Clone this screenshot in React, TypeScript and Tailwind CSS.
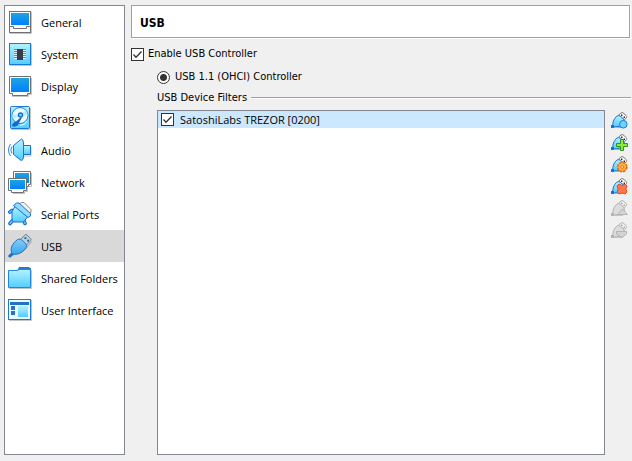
import React, { useState } from 'react';

interface IconProps {
  className?: string;
}

const Gradients: React.FC = () => (
  <svg className="absolute w-0 h-0" aria-hidden="true">
    <defs>
      <linearGradient id="screen" x1="0" y1="0" x2="0" y2="1">
        <stop offset="0" stopColor="#1fa3e0" />
        <stop offset="1" stopColor="#0080ff" />
      </linearGradient>
      <linearGradient id="cyan" x1="0" y1="0" x2="0" y2="1">
        <stop offset="0" stopColor="#b4f2ff" />
        <stop offset="1" stopColor="#52cdff" />
      </linearGradient>
      <linearGradient id="plug" x1="0" y1="0" x2="0" y2="1">
        <stop offset="0" stopColor="#86ccf2" />
        <stop offset="1" stopColor="#36a8f2" />
      </linearGradient>
    </defs>
  </svg>
);

const GeneralIcon: React.FC = () => (
  <>
    <path d="M2 23.5H23.5V2" fill="none" stroke="#c4c4c4" />
    <rect x="1.5" y="1.5" width="21" height="21" fill="#fff" stroke="#707070" />
    <rect x="3" y="3" width="18" height="12" fill="url(#screen)" />
    <path d="M1.5 16.5H5.5V18.5H18.5V16.5H22.5" fill="none" stroke="#707070" />
  </>
);

const SystemIcon: React.FC = () => (
  <>
    <path d="M2 23.5H23.5V2" fill="none" stroke="#c4c4c4" />
    <rect x="1.5" y="1.5" width="21" height="21" fill="url(#cyan)" stroke="#1a78d6" />
    <path d="M6 7.5H18M6 9.5H18M6 11.5H18M6 13.5H18M6 15.5H18" stroke="#3d95d8" />
    <path d="M6 8.5H18M6 10.5H18M6 12.5H18M6 14.5H18M6 16.5H18" stroke="#d8f6ff" />
    <rect x="9" y="7" width="6" height="11" fill="#363c48" />
  </>
);

const DisplayIcon: React.FC = () => (
  <>
    <path d="M4 22.5H20.5V20.5H23.5V4" fill="none" stroke="#c4c4c4" />
    <path d="M1.5 2.5H22.5V19.5H19.5V21.5H4.5V19.5H1.5Z" fill="#fff" stroke="#707070" />
    <rect x="3" y="4" width="18" height="14" fill="url(#screen)" />
  </>
);

const StorageIcon: React.FC = () => (
  <>
    <path d="M3 23.5H22.5V2" fill="none" stroke="#c4c4c4" />
    <rect x="2.5" y="0.5" width="19" height="22" rx="1" fill="url(#cyan)" stroke="#1a78d6" />
    <circle cx="12" cy="9.5" r="8" fill="#e8faff" stroke="#2583d4" />
    <path d="M12 9.5L17.5 4A8 8 0 0 1 19.5 9.5ZM12 9.5L5 13A8 8 0 0 1 4.5 8Z" fill="#b9ecfc" />
    <circle cx="12.5" cy="9" r="2" fill="#7fd8ff" stroke="#1a6fc4" strokeWidth="1.4" />
    <path d="M14 11.5L9.5 19.5Q7 21.5 4 20Q4 17 8 15.5L12.5 11.5Z" fill="#1769c9" />
    <path d="M12 19.5Q17 19 19 15" fill="none" stroke="#f0fcff" />
  </>
);

const AudioIcon: React.FC = () => (
  <>
    <path d="M13 23L8 18.5M16 18H23V9" fill="none" stroke="#b8c4cc" />
    <path d="M13.5 1L5.5 7.5V16.5L13.5 22.5Q15 22.5 15.5 19V5Q15 1 13.5 1Z" fill="url(#cyan)" stroke="#1f72c8" />
    <path d="M15.5 7.5H22.5V16.5H15.5Z" fill="url(#cyan)" stroke="#1f72c8" />
    <path d="M4 8.5Q1.5 12 4 15.5M2.5 6Q-1.5 12 2.5 18" fill="none" stroke="#3185d0" />
  </>
);

const NetworkIcon: React.FC = () => (
  <>
    <path d="M5 23.5H16.5V21.5H19.5V16.5H23.5V3" fill="none" stroke="#c0c0c0" />
    <path d="M5.5 1.5H22.5V14.5H20.5V16.5H8.5V14.5H5.5Z" fill="#fff" stroke="#707070" />
    <rect x="7" y="3" width="14" height="10" fill="url(#screen)" />
    <path d="M0.5 8.5H18.5V20.5H15.5V22.5H3.5V20.5H0.5Z" fill="#fff" stroke="#707070" />
    <rect x="2" y="10" width="15" height="9" fill="url(#screen)" />
  </>
);

const SerialIcon: React.FC = () => (
  <>
    <path d="M11 2L13.5 0.5H16L23 7.5V10.5L20.5 12.5Z" fill="#f4f4f4" stroke="#858585" />
    <path d="M4.5 18.5L2 21.5M16 19L17 21.5M1.8 10.2L4 8.5" stroke="#1c6fca" strokeWidth="3.6" strokeLinecap="round" />
    <path d="M4.5 18.5L2 21.5M16 19L17 21.5M1.8 10.2L4 8.5" stroke="#71caff" strokeWidth="1.4" strokeLinecap="round" />
    <path d="M7 4.5L4 9.5V18.5L6 20H15.5L19.5 15L9.5 4.5Z" fill="url(#cyan)" stroke="#1c6fca" />
    <path d="M5.5 3.5L8.5 1H11L22.5 11.5V14L20 15.5Z" fill="#8fdcff" stroke="#1c6fca" />
  </>
);

const UsbPlugIcon: React.FC = () => (
  <>
    <path d="M2 23.5L6 20.5Q14 20 18.5 14L23.5 7.5" fill="none" stroke="#9da5ab" />
    <path d="M12 6L17 0.8Q18 0 19 1L22.8 4.8Q23.5 5.7 22.6 6.6L18 11.5Z" fill="#b9d0e2" stroke="#6c8398" />
    <path d="M16.5 3.2h1.8v1.8h-1.8zM19.2 5.8h1.8v1.8h-1.8z" fill="#35506a" />
    <path d="M4.5 19.5L1.8 22" stroke="#1f72c8" strokeWidth="3" strokeLinecap="round" />
    <path d="M3.5 18.5Q1.5 11.5 9.5 5.5Q12.5 4.2 14.5 6.5L17.5 9.3Q19.5 11.5 18 14Q12 21.5 5 20Z" fill="url(#plug)" stroke="#2878bd" />
  </>
);

const FolderIcon: React.FC = () => (
  <>
    <path d="M1 22.5H23.5V4" fill="none" stroke="#bdc3c8" />
    <path d="M9 5L11 1H21L22 2H23V5Z" fill="#2a78d0" />
    <path d="M0.5 4.5H9.5L11 3.5H22.5V21.5H0.5Z" fill="url(#cyan)" stroke="#2385dc" />
  </>
);

const InterfaceIcon: React.FC = () => (
  <>
    <path d="M1 22.5H23.5V2" fill="none" stroke="#c4c4c4" />
    <rect x="0.5" y="1.5" width="22" height="20" fill="#e9fbff" stroke="#1a78d6" />
    <rect x="2" y="4" width="19" height="3" fill="#2372c8" />
    <rect x="3" y="8" width="4" height="4" fill="#2372c8" />
    <rect x="3" y="13" width="4" height="4" fill="#2372c8" />
    <rect x="10" y="8" width="10" height="11" fill="url(#cyan)" />
  </>
);

const categories = [
  { name: 'General', icon: GeneralIcon },
  { name: 'System', icon: SystemIcon },
  { name: 'Display', icon: DisplayIcon },
  { name: 'Storage', icon: StorageIcon },
  { name: 'Audio', icon: AudioIcon },
  { name: 'Network', icon: NetworkIcon },
  { name: 'Serial Ports', icon: SerialIcon },
  { name: 'USB', icon: UsbPlugIcon },
  { name: 'Shared Folders', icon: FolderIcon },
  { name: 'User Interface', icon: InterfaceIcon },
];

interface FilterIconProps extends IconProps {
  disabled?: boolean;
  children: React.ReactNode;
}

// Small plug shared by all of the filter buttons, the badge goes on top
const FilterIcon: React.FC<FilterIconProps> = ({ disabled, children, className = '' }) => (
  <svg viewBox="0 0 17 17" className={`block w-[17px] h-[17px] ${className}`} aria-hidden="true">
    <path d="M7.5 3.2L10 1Q11 0.3 12 0.8L15.2 3.6Q16 4.6 15.4 5.6L13.5 7.8Z" fill={disabled ? '#f0f0f0' : '#fff'} stroke={disabled ? '#b4b4b4' : '#777'} />
    <path d="M10 2.5h1.4v1.4H10zM12.6 4.6H14V6h-1.4z" fill={disabled ? '#a8a8a8' : '#222'} />
    <path d="M1.8 14.8Q1.2 8.5 5.6 4.3Q7.5 2.8 9.5 4.3L12.8 7.3Q14.5 10 12 12.5Q9 15.2 1.8 14.8Z" fill={disabled ? '#dcdcdc' : 'url(#cyan)'} stroke={disabled ? '#b4b4b4' : '#1d70cc'} />
    <path d="M3 15.5H12" stroke={disabled ? '#c4c4c4' : '#9fb4c6'} />
    <rect x="0" y="13" width="3" height="3" fill={disabled ? '#b4b4b4' : '#1d70cc'} />
    {children}
  </svg>
);

const filterActions = [
  {
    title: 'Add Empty Filter',
    disabled: false,
    badge: <circle cx="12.3" cy="12.3" r="3.8" fill="#72d2ff" stroke="#1d7bd6" />,
  },
  {
    title: 'Add Filter From Device',
    disabled: false,
    badge: <path d="M9.5 5.5H12.5V9.5H16.5V12.5H12.5V16.5H9.5V12.5H5.5V9.5H9.5Z" fill="#8cea3a" stroke="#34931c" />,
  },
  {
    title: 'Edit Filter',
    disabled: false,
    badge: (
      <>
        <circle cx="11.2" cy="11" r="4.6" fill="#ffa629" stroke="#ea7210" strokeWidth="1.8" strokeDasharray="2.6 1" />
        <circle cx="11.2" cy="11" r="3.4" fill="#ffb13c" />
        <circle cx="11.2" cy="11" r="1.4" fill="#ffe6b8" stroke="#ea7210" />
      </>
    ),
  },
  {
    title: 'Remove Filter',
    disabled: false,
    badge: <path d="M6 8L8 6L11 7.5L14 6L16 8L14.8 11L16 14L14 16L11 14.8L8 16L6 14L7.2 11Z" fill="#ff7650" stroke="#dd4a22" />,
  },
  {
    title: 'Move Filter Up',
    disabled: true,
    badge: <path d="M6.5 14.5L11.5 9L16.5 14.5Z" fill="#d4d4d4" stroke="#b4b4b4" />,
  },
  {
    title: 'Move Filter Down',
    disabled: true,
    badge: <path d="M5.5 9.5H15.5V12L11 15.5L5.5 12Z" fill="#d4d4d4" stroke="#b4b4b4" />,
  },
];

interface CheckBoxProps {
  id: string;
  checked: boolean;
  onChange: (checked: boolean) => void;
}

const CheckBox: React.FC<CheckBoxProps> = ({ id, checked, onChange }) => (
  <span className="relative block w-[13px] h-[13px] shrink-0">
    <input
      id={id}
      type="checkbox"
      checked={checked}
      onChange={(e) => onChange(e.target.checked)}
      className="block appearance-none w-[13px] h-[13px] bg-white border border-[#333]"
    />
    {checked && (
      <svg viewBox="0 0 13 13" className="absolute inset-0 w-[13px] h-[13px] pointer-events-none" aria-hidden="true">
        <path d="M2.5 6.5L5 9.2L10.5 3.5" fill="none" stroke="#333" strokeWidth="1.3" />
      </svg>
    )}
  </span>
);

const App: React.FC = () => {
  const [selected, setSelected] = useState('USB');
  const [enabled, setEnabled] = useState(true);
  const [filterOn, setFilterOn] = useState(true);

  return (
    <div className="flex h-screen gap-[6px] bg-[#f0f0f0] pt-[5px] pb-[6px] pl-1 text-black font-['DejaVu_Sans_Condensed','DejaVu_Sans',sans-serif] text-[11px] leading-4">
      <Gradients />
      <nav className="w-[121px] shrink-0 bg-white border border-[#828790] font-['Open_Sans',sans-serif]">
        {categories.map(({ name, icon: Icon }) => (
          <button
            key={name}
            type="button"
            onClick={() => setSelected(name)}
            className={`flex items-center gap-[9px] w-full h-8 pl-[3px] text-left whitespace-nowrap leading-[19px] ${selected === name ? 'bg-[#d9d9d9]' : ''}`}
          >
            <svg viewBox="0 0 24 24" className="w-6 h-6 shrink-0" aria-hidden="true"><Icon /></svg>
            {name}
          </button>
        ))}
      </nav>

      <main className="flex flex-col flex-1 min-w-0">
        <h1 className="flex items-center h-[33px] mr-[2px] pt-[2px] pl-2 bg-white border border-[#a0a0a0] shadow-[1px_1px_0_#fff] text-[12px] font-bold">{selected}</h1>

        <div className="flex items-center gap-1 mt-2">
          <CheckBox id="enable-usb" checked={enabled} onChange={setEnabled} />
          <label htmlFor="enable-usb">Enable USB Controller</label>
        </div>

        <div className="flex flex-col flex-1 min-h-0 pl-[26px]">
          <div className="flex items-center gap-[5px] mt-[7px]">
            <input
              id="usb-ohci"
              type="radio"
              name="controller"
              defaultChecked
              className="appearance-none w-[13px] h-[13px] rounded-full bg-white border border-[#333] checked:bg-[radial-gradient(circle,#333_3px,#fff_4px)]"
            />
            <label htmlFor="usb-ohci">USB 1.1 (OHCI) Controller</label>
          </div>

          <div className="flex items-center gap-1 mt-[5px] mr-px">
            <h2>USB Device Filters</h2>
            <div className="flex-1 h-[2px] bg-white border-t border-[#a0a0a0]" />
          </div>

          <div className="flex flex-1 min-h-0 gap-[6px] mt-1">
            <ul className="flex-1 min-w-0 bg-white border border-[#828790] font-['Open_Sans',sans-serif]">
              <li className="flex items-center gap-[6px] h-[17px] pl-[3px] bg-[#cce8ff]">
                <CheckBox id="filter-trezor" checked={filterOn} onChange={setFilterOn} />
                <label htmlFor="filter-trezor">SatoshiLabs TREZOR [0200]</label>
              </li>
            </ul>
            <div className="flex flex-col gap-[5px] pt-[2px] pr-1">
              {filterActions.map(({ title, disabled, badge }) => (
                <button key={title} type="button" title={title} aria-label={title} disabled={disabled}>
                  <FilterIcon disabled={disabled}>{badge}</FilterIcon>
                </button>
              ))}
            </div>
          </div>
        </div>
      </main>
    </div>
  );
};

export default App;
